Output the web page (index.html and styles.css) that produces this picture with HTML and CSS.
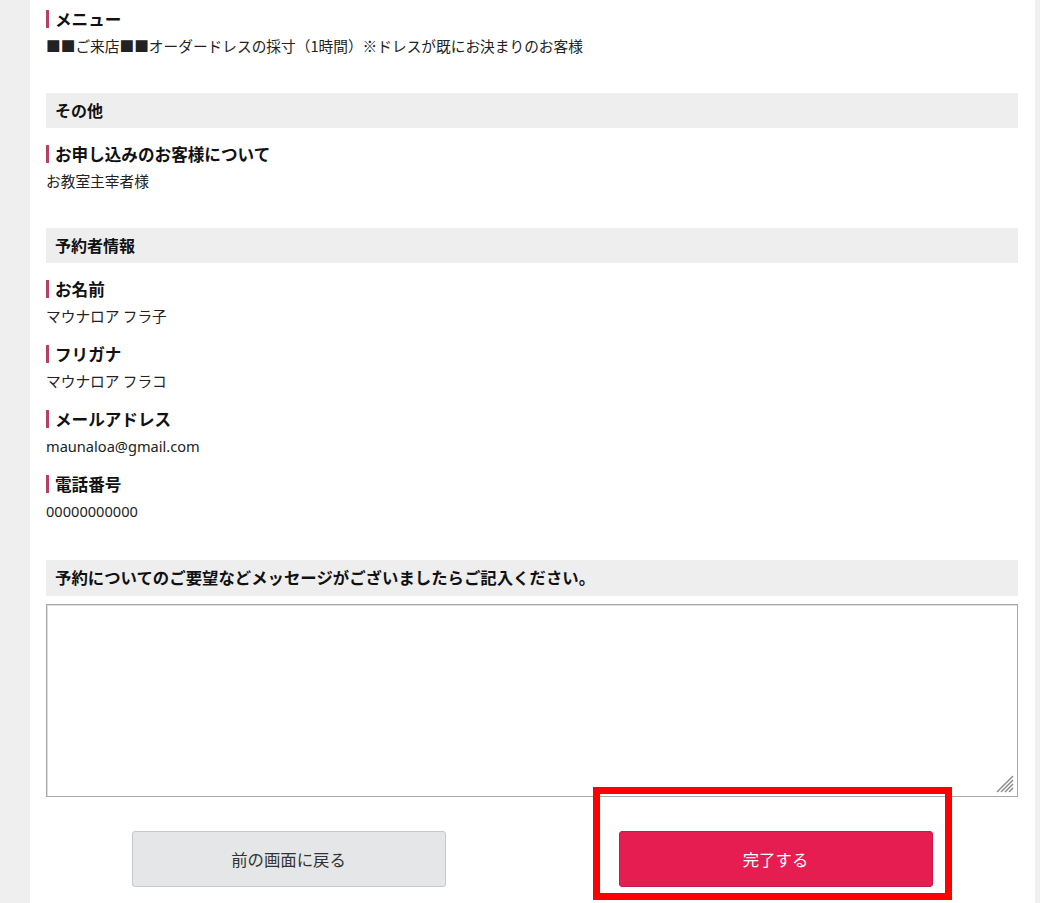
FILE: index.html
```html
<!DOCTYPE html>
<html lang="ja">
<head>
<meta charset="utf-8">
<title>予約内容確認</title>
<link rel="stylesheet" href="styles.css">
</head>
<body>
<div class="page">
  <main class="sheet">
    <div class="item">
      <div class="label">メニュー</div>
      <div class="value">■■ご来店■■オーダードレスの採寸（1時間）※ドレスが既にお決まりのお客様</div>
    </div>

    <div class="section-head">その他</div>
    <div class="item">
      <div class="label">お申し込みのお客様について</div>
      <div class="value">お教室主宰者様</div>
    </div>

    <div class="section-head">予約者情報</div>
    <div class="item">
      <div class="label">お名前</div>
      <div class="value">マウナロア フラ子</div>
    </div>
    <div class="item">
      <div class="label">フリガナ</div>
      <div class="value">マウナロア フラコ</div>
    </div>
    <div class="item">
      <div class="label">メールアドレス</div>
      <div class="value latin">maunaloa@gmail.com</div>
    </div>
    <div class="item">
      <div class="label">電話番号</div>
      <div class="value latin">00000000000</div>
    </div>

    <div class="section-head message-head">予約についてのご要望などメッセージがございましたらご記入ください。</div>
    <div class="message-wrap">
      <textarea class="message"></textarea>
      <svg class="grip" width="22" height="22" viewBox="0 0 22 22" aria-hidden="true">
        <g stroke="#8a8a8a" stroke-width="1.4">
          <line x1="3" y1="19" x2="19" y2="3"/>
          <line x1="7" y1="19" x2="19" y2="7"/>
          <line x1="11" y1="19" x2="19" y2="11"/>
          <line x1="15" y1="19" x2="19" y2="15"/>
        </g>
      </svg>
    </div>

    <div class="actions">
      <button class="btn btn-back" type="button">前の画面に戻る</button>
      <button class="btn btn-done" type="button">完了する</button>
    </div>
  </main>
</div>
<div class="highlight"></div>
</body>
</html>
```

FILE: styles.css
```css
html, body {
  margin: 0;
  padding: 0;
}
body {
  background: #efefef;
  font-family: "Noto Sans CJK JP", "Noto Sans", sans-serif;
  color: #1a1a1a;
  height: 903px;
  overflow: hidden;
  position: relative;
}
.page {
  display: flex;
  padding-left: 30px;
  padding-right: 5px;
  height: 903px;
  box-sizing: border-box;
}
.sheet {
  flex: 1;
  background: #fff;
  padding: 6px 17px 0 16px;
  box-sizing: border-box;
}
.item {
  margin-bottom: 11px;
}
.label {
  font-size: 16.6px;
  font-weight: 700;
  line-height: 26px;
  height: 26px;
  padding-left: 9px;
  position: relative;
  color: #111;
}
.label::before {
  content: "";
  position: absolute;
  left: 0;
  top: 4px;
  width: 3px;
  height: 18px;
  background: #b5405f;
}
.value {
  font-size: 14.7px;
  line-height: 28px;
  height: 28px;
  color: #222;
  white-space: nowrap;
}
.value.latin {
  font-family: "Noto Sans", "Noto Sans CJK JP", sans-serif;
  font-size: 14.6px;
}
.section-head {
  margin-top: 33px;
  margin-bottom: 13px;
  height: 35px;
  line-height: 35px;
  background: #eeeeee;
  padding-left: 9px;
  font-size: 16px;
  font-weight: 700;
  color: #111;
}
.message-head {
  margin-top: 35px;
  margin-bottom: 8px;
  height: 36px;
  font-size: 16.4px;
}
.message-wrap {
  position: relative;
  height: 193px;
}
.message {
  display: block;
  box-sizing: border-box;
  width: 100%;
  height: 193px;
  border: 1px solid #a9a9a9;
  box-shadow: inset 1px 1px 0 #ddd;
  resize: none;
  margin: 0;
  padding: 4px;
  font-family: inherit;
}
.grip {
  position: absolute;
  right: 2px;
  bottom: 2px;
}
.actions {
  display: flex;
  justify-content: center;
  gap: 173px;
  margin-top: 34px;
}
.btn {
  width: 314px;
  height: 56px;
  border-radius: 3px;
  font-family: "Noto Sans CJK JP", sans-serif;
  font-size: 16.4px;
  cursor: pointer;
}
.btn-back {
  background: #e5e6e8;
  border: 1px solid #c6c7c9;
  color: #333;
}
.btn-done {
  background: #e61d50;
  border: 1px solid #c8194a;
  color: #fff;
}
.highlight {
  position: absolute;
  left: 593px;
  top: 787px;
  width: 359px;
  height: 113px;
  box-sizing: border-box;
  border: 7px solid #ff0000;
  pointer-events: none;
}
```
